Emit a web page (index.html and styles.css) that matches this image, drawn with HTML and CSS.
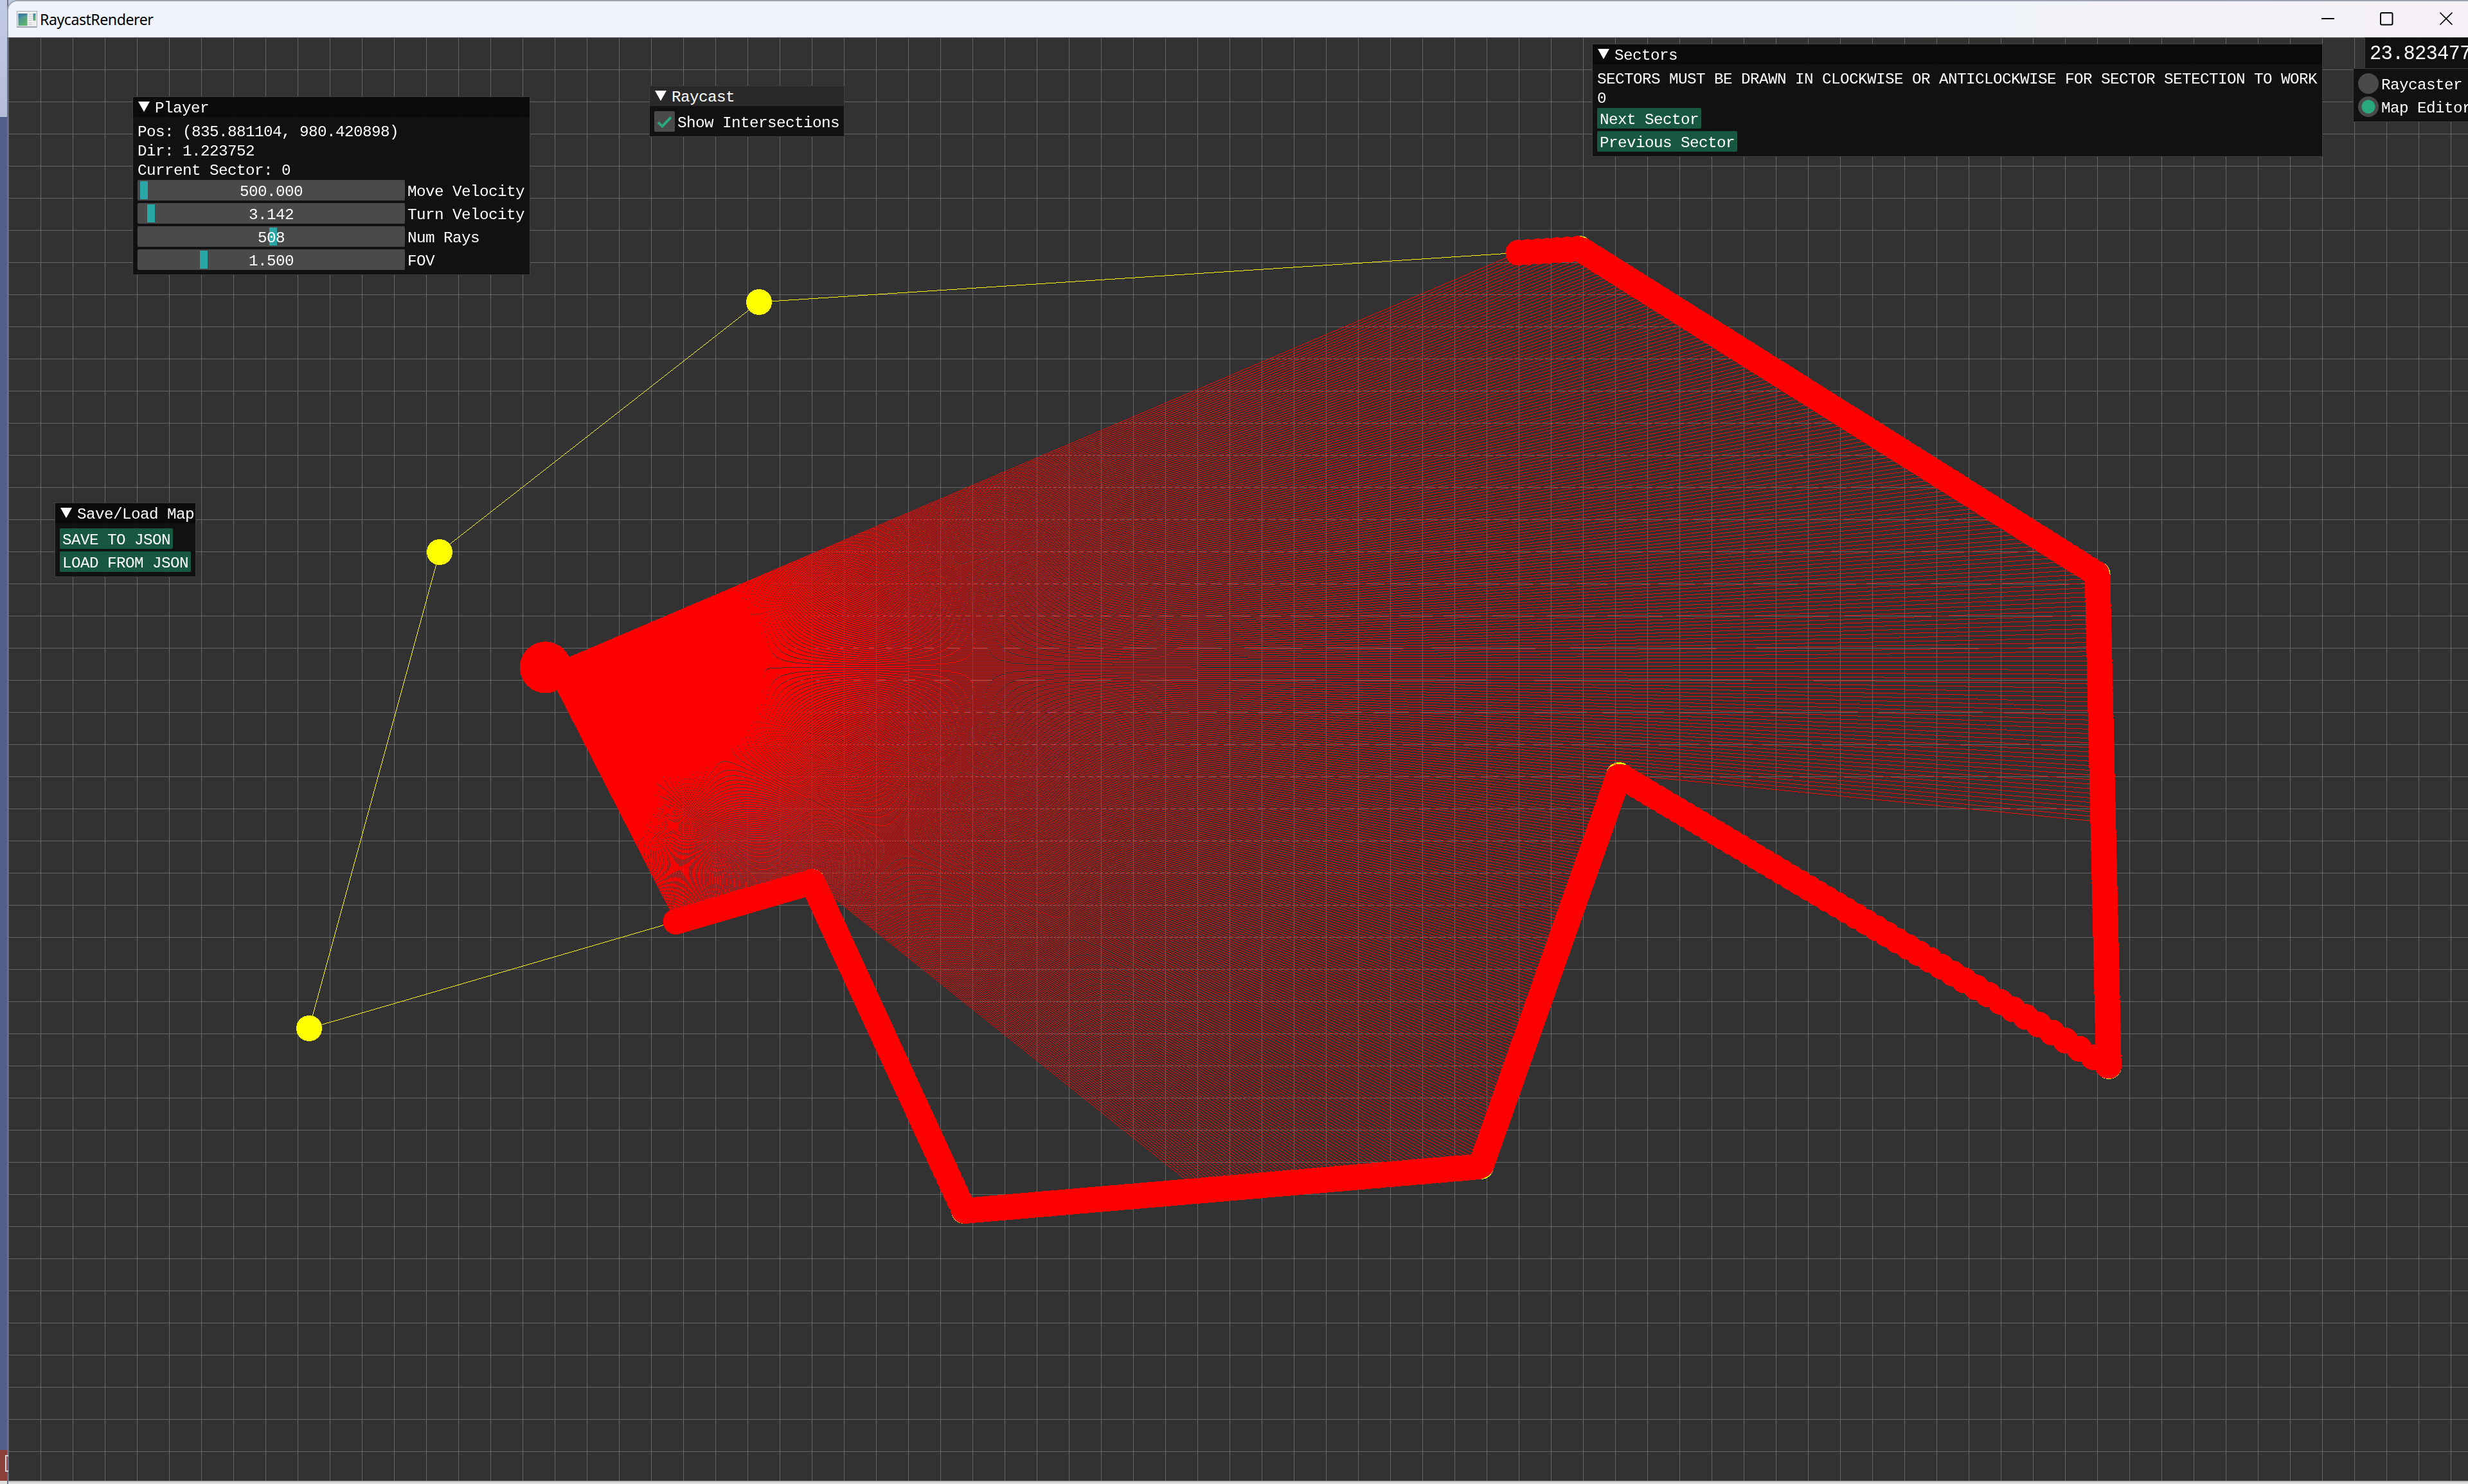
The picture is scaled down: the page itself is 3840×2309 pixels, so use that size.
FILE: index.html
```html
<!DOCTYPE html>
<html lang="en">
<head>
<meta charset="utf-8">
<title>RaycastRenderer</title>
<link rel="stylesheet" href="styles.css">
</head>
<body>
<div class="desktop">
  <div class="behind">
    <div class="behind-top"></div>
    <div class="behind-mid"></div>
    <div class="behind-low"><span class="bracket"></span></div>
  </div>
  <div class="window">
    <header class="titlebar">
      <svg class="app-icon" viewBox="0 0 32 26" width="32" height="26">
        <defs>
          <linearGradient id="pane" x1="0" y1="0" x2="0.6" y2="1">
            <stop offset="0" stop-color="#3f7fae"/><stop offset="1" stop-color="#62b56c"/>
          </linearGradient>
        </defs>
        <rect x="0.5" y="0.5" width="31" height="24.5" fill="#eceef0" stroke="#a9aeb5"/>
        <rect x="2.5" y="4" width="14" height="19" fill="url(#pane)"/>
        <path d="M2.5 12Q9 7 16.5 6V4H2.5Z" fill="#3c79a8" opacity="0.6"/>
        <path d="M18.5 5.5h5M18.5 8.5h5M18.5 11.5h5M18.5 14.5h5M18.5 18.5h5M18.5 21.5h5" stroke="#c3c6ca"/>
        <rect x="25.5" y="4" width="4" height="11" fill="url(#pane)"/>
        <rect x="0" y="24" width="32" height="2" fill="#a3a7ad"/>
      </svg>
      <span class="app-name">RaycastRenderer</span>
      <svg class="controls" viewBox="0 0 240 56" width="240" height="56" fill="none" stroke="#000" stroke-width="2">
        <path d="M12 27H32"/>
        <rect x="104" y="18" width="18.5" height="18.5" rx="2"/>
        <path d="M196.5 17.5L215.5 36.5M215.5 17.5L196.5 36.5" stroke-width="1.7"/>
      </svg>
    </header>
    <main class="viewport">
      <canvas class="map" id="map" width="3827" height="2246"></canvas>

      <section class="panel player">
        <h2 class="bar"><i class="arrow"></i>Player</h2>
        <div class="body">
          <p class="line">Pos: (835.881104, 980.420898)</p>
          <p class="line">Dir: 1.223752</p>
          <p class="line">Current Sector: 0</p>
          <div class="field"><div class="slider"><i class="grab" style="left:4px"></i><span class="value">500.000</span></div><span>Move Velocity</span></div>
          <div class="field"><div class="slider"><i class="grab" style="left:15px"></i><span class="value">3.142</span></div><span>Turn Velocity</span></div>
          <div class="field"><div class="slider"><i class="grab" style="left:205px"></i><span class="value">508</span></div><span>Num Rays</span></div>
          <div class="field"><div class="slider"><i class="grab" style="left:97px"></i><span class="value">1.500</span></div><span>FOV</span></div>
        </div>
      </section>

      <section class="panel raycast">
        <h2 class="bar idle"><i class="arrow"></i>Raycast</h2>
        <div class="body">
          <label class="field"><svg class="check" viewBox="0 0 32 32" width="32" height="32"><path d="M6 17.5L12.5 23.5L26 9.5" fill="none" stroke="#29a77e" stroke-width="4"/></svg><span>Show Intersections</span></label>
        </div>
      </section>

      <section class="panel sectors">
        <h2 class="bar"><i class="arrow"></i>Sectors</h2>
        <div class="body">
          <p class="line">SECTORS MUST BE DRAWN IN CLOCKWISE OR ANTICLOCKWISE FOR SECTOR SETECTION TO WORK</p>
          <p class="line">0</p>
          <button class="btn">Next Sector</button>
          <button class="btn">Previous Sector</button>
        </div>
      </section>

      <section class="panel timing"><p class="fps">23.823477</p></section>

      <section class="panel modes">
        <div class="body">
          <label class="field"><i class="radio"></i><span>Raycaster</span></label>
          <label class="field"><i class="radio on"></i><span>Map Editor</span></label>
        </div>
      </section>

      <section class="panel files">
        <h2 class="bar"><i class="arrow"></i>Save/Load Map</h2>
        <div class="body">
          <button class="btn">SAVE TO JSON</button>
          <button class="btn">LOAD FROM JSON</button>
        </div>
      </section>
    </main>
    <div class="window-foot"></div>
  </div>
</div>
<script src="map.js"></script>
</body>
</html>
```
FILE: map.js
```js
const canvas = document.getElementById('map');
const ctx = canvas.getContext('2d');
const W = canvas.width, H = canvas.height;
const image = ctx.createImageData(W, H);
const px = new Uint32Array(image.data.buffer);

// ABGR
const BACK = 0xff323232, GRID = 0xff666666, RED = 0xff0000ff, YELLOW = 0xff00ffff;

px.fill(BACK);
for (let y = 0; y < H; y++)
  for (let x = 0; x < W; x++)
    if (x % 50 === 0 || y % 50 === 0) px[y * W + x] = GRID;

function line(x0, y0, x1, y1, color) {
  const dx = x1 - x0, dy = y1 - y0;
  const n = Math.ceil(Math.max(Math.abs(dx), Math.abs(dy)));
  if (Math.abs(dx) >= Math.abs(dy)) {
    const s = Math.sign(dx), k = dy / dx;
    for (let i = 0; i <= n; i++) {
      const x = Math.floor(x0) + s * i;
      const y = Math.floor(y0 + (x + 0.5 - x0) * k);
      if (x >= 0 && x < W && y >= 0 && y < H) px[y * W + x] = color;
    }
  } else {
    const s = Math.sign(dy), k = dx / dy;
    for (let i = 0; i <= n; i++) {
      const y = Math.floor(y0) + s * i;
      const x = Math.floor(x0 + (y + 0.5 - y0) * k);
      if (x >= 0 && x < W && y >= 0 && y < H) px[y * W + x] = color;
    }
  }
}

function disc(cx, cy, r, color) {
  for (let y = Math.ceil(cy - r - 0.5); y + 0.5 <= cy + r; y++) {
    const h = Math.sqrt(Math.max(0, r * r - (y + 0.5 - cy) ** 2));
    const a = Math.ceil(cx - h - 0.5), b = Math.floor(cx + h - 0.5);
    if (b >= a) px.fill(color, y * W + a, y * W + b + 1);
  }
}

const walls = [
  [468, 1542], [671, 801], [1168, 412], [2445, 329], [3250.5, 835.5],
  [3268, 1601], [2506, 1148], [2291, 1757], [1487, 1826], [1251, 1314]
];
const player = { x: 835.881104, y: 980.420898, dir: 1.223752, fov: 1.5, rays: 508 };

walls.forEach((a, i) => {
  const b = walls[(i + 1) % walls.length];
  line(a[0], a[1], b[0], b[1], YELLOW);
});
walls.forEach(v => disc(v[0], v[1], 20, YELLOW));

const hits = [];
for (let i = 0; i <= player.rays; i++) {
  const t = player.dir + player.fov / 2 - i * player.fov / player.rays;
  const dx = Math.sin(t), dy = Math.cos(t);
  let near = Infinity;
  walls.forEach((a, j) => {
    const b = walls[(j + 1) % walls.length];
    const ex = b[0] - a[0], ey = b[1] - a[1];
    const det = dx * ey - dy * ex;
    const ax = a[0] - player.x, ay = a[1] - player.y;
    const d = (ax * ey - ay * ex) / det;
    const u = (ax * dy - ay * dx) / det;
    if (d > 0 && u >= 0 && u <= 1) {
      hits.push([player.x + dx * d, player.y + dy * d]);
      near = Math.min(near, d);
    }
  });
  if (near < Infinity)
    line(player.x, player.y, player.x + dx * near, player.y + dy * near, RED);
}
hits.forEach(p => disc(p[0], p[1], 20, RED));
disc(player.x, player.y, 40, RED);

ctx.putImageData(image, 0, 0);
```
FILE: styles.css
```css
* { box-sizing: border-box; }
body { margin: 0; overflow: hidden; background: #dfdfdf; }
.desktop { display: flex; width: 3840px; height: 2309px; background: #bfc8e2; }

.behind { display: flex; flex-direction: column; width: 13px; flex: none; border-right: 2px solid #6b7285; }
.behind-top { height: 182px; background: linear-gradient(#c2cbe6, #b5bcd8); }
.behind-mid { height: 2074px; background: #525f8b; }
.behind-low { height: 53px; background: #8a4038; padding: 8px 0 0 8px; border-bottom: 5px solid #dfdfdf; }
.bracket { display: block; width: 5px; height: 26px; border: 2px solid #d5d5d5; border-right: 0; }

.window { display: flex; flex-direction: column; width: 3827px; }
.titlebar {
  display: flex; align-items: center; height: 58px; padding-left: 13px; margin-left: -2px;
  border-top: 2px solid #9da3b1; border-left: 2px solid #9da3b1; border-top-left-radius: 16px;
  background: linear-gradient(90deg, #f0f3fb 0 78%, #f0f3f8 82%, #f3f1f8 86%, #f5f1f7);
}
.app-icon { flex: none; }
.app-name { margin-left: 4px; font: 23.2px/32px "Noto Sans", sans-serif; color: #000; letter-spacing: -0.5px; }
.controls { margin-left: auto; flex: none; }

.viewport { position: relative; width: 3827px; height: 2246px; overflow: hidden; }
.map { display: block; }
.window-foot { height: 5px; background: #dfdfdf; border-top: 2px solid #b4b4b4; }

.panel {
  position: absolute; color: #fff; background: rgba(15, 15, 15, 0.94);
  outline: 1px solid #3d3d44; outline-offset: -1px;
  font: 24.3px/31px "Liberation Mono", monospace; letter-spacing: -0.58px; white-space: nowrap;
}
.player { left: 193px; top: 92px; width: 619px; }
.raycast { left: 997px; top: 75px; width: 304px; }
.sectors { left: 2464px; top: 10px; width: 1137px; }
.timing { left: 3666px; top: 0; width: 178px; height: 49px; }
.modes { left: 3648px; top: 48px; width: 190px; }
.files { left: 72px; top: 724px; width: 220px; }

.bar {
  display: flex; height: 32px; margin: 0; padding: 2px 0 0 8px; font: inherit;
  background: #0a0a0a; border: 1px solid #3d3d44; border-bottom: 0;
}
.idle { background: #292929; }
.arrow { width: 18px; height: 16px; margin: 5px 8px 0 0; background: #fff; clip-path: polygon(0 0, 100% 0, 50% 100%); }
.body { display: flex; flex-direction: column; align-items: flex-start; gap: 4px; padding: 8px; }
.line { height: 26px; margin: 0; }
.field { display: flex; gap: 4px; height: 32px; }
.field > span { padding-top: 3px; height: 32px; }
.slider { position: relative; width: 416px; height: 32px; padding-top: 3px; background: #4a4a4a; border-radius: 2px; text-align: center; }
.grab { position: absolute; top: 2px; width: 12px; height: 28px; background: #29a7a7; }
.value { position: relative; }
.check { background: #4a4a4a; border-radius: 2px; }
.btn {
  display: flex; align-items: flex-start; height: 32px; padding: 3px 4px 0; border: 0; border-radius: 2px;
  background: #185840; color: inherit; font: inherit; letter-spacing: inherit;
}
.radio { width: 32px; height: 32px; border-radius: 50%; background: #4a4a4a; }
.on { background: radial-gradient(circle, #29a77e 10px, #4a4a4a 11px); }
.fps { margin: 0; padding: 7px 0 0 8px; font-size: 30.5px; line-height: 38px; letter-spacing: -0.8px; }
```
